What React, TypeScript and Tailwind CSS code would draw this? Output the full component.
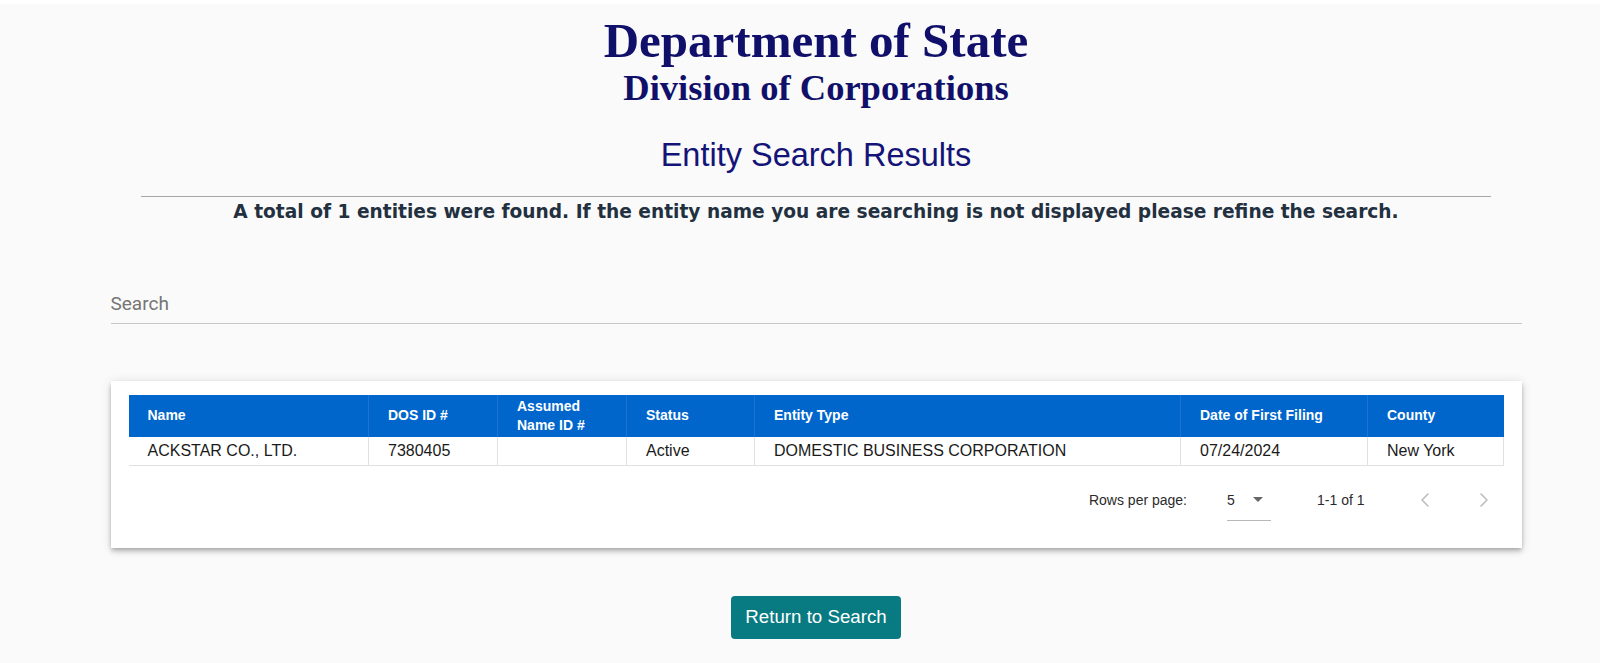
import { ChevronLeft, ChevronRight } from "lucide-react";

export default function App() {
  return (
    <div className="min-h-screen bg-[#fafafa] font-['Liberation_Sans',Arial,sans-serif]">
      <div className="h-[4px] bg-white" />
      <div className="pl-[32px] flex flex-col items-center">
        <h1 className="mt-[9px] text-[49px] leading-[55px] font-bold text-[#10106b] font-['Liberation_Serif',serif]">
          Department of State
        </h1>
        <h2 className="text-[36.5px] leading-[40px] font-bold text-[#10106b] font-['Liberation_Serif',serif]">
          Division of Corporations
        </h2>
        <h3 className="mt-[31px] text-[32.5px] leading-[32.5px] text-[#141478]">
          Entity Search Results
        </h3>
        <div className="mt-[24px] w-[1350px] border-t border-[#a6a6a6]" />
        <p className="mt-[6px] text-[18.6px] leading-[18px] font-bold text-[#22303f] font-['DejaVu_Sans',Verdana,sans-serif]">
          A total of 1 entities were found. If the entity name you are searching is not displayed please refine the search.
        </p>
        <input
          type="text"
          placeholder="Search"
          className="mt-[70px] w-[1411px] h-[33px] pb-[6px] border-b border-[#c8c8c8] bg-transparent outline-none text-[19px] font-['Roboto',sans-serif] text-[#333] placeholder:text-[#757575]"
        />
        <div className="mt-[57px] w-[1411px] bg-white px-[18px] pt-[14px] pb-[22px] shadow-[0_2px_4px_-1px_rgba(0,0,0,0.2),0_4px_5px_0_rgba(0,0,0,0.14),0_1px_10px_0_rgba(0,0,0,0.12)]">
          <table className="w-full table-fixed border-collapse">
            <colgroup>
              <col className="w-[240px]" />
              <col className="w-[129px]" />
              <col className="w-[129px]" />
              <col className="w-[128px]" />
              <col className="w-[426px]" />
              <col className="w-[187px]" />
              <col className="w-[136px]" />
            </colgroup>
            <thead>
              <tr className="h-[42px] bg-[#0066cc] text-white text-left text-[14px] leading-[19px] font-bold">
                <th className="pl-[19px] pr-[8px] border-r border-[#1c73d2]">Name</th>
                <th className="pl-[19px] pr-[8px] border-r border-[#1c73d2]">DOS ID #</th>
                <th className="pl-[19px] pr-[19px] border-r border-[#1c73d2]">Assumed Name ID #</th>
                <th className="pl-[19px] pr-[8px] border-r border-[#1c73d2]">Status</th>
                <th className="pl-[19px] pr-[8px] border-r border-[#1c73d2]">Entity Type</th>
                <th className="pl-[19px] pr-[8px] border-r border-[#1c73d2]">Date of First Filing</th>
                <th className="pl-[19px] pr-[8px]">County</th>
              </tr>
            </thead>
            <tbody>
              <tr className="text-[16px] text-[#1a1a1a]">
                <td className="h-[29px] pl-[19px] border-b border-r border-[#e0e0e0]">ACKSTAR CO., LTD.</td>
                <td className="h-[29px] pl-[19px] border-b border-r border-[#e0e0e0]">7380405</td>
                <td className="h-[29px] pl-[19px] border-b border-r border-[#e0e0e0]"></td>
                <td className="h-[29px] pl-[19px] border-b border-r border-[#e0e0e0]">Active</td>
                <td className="h-[29px] pl-[19px] border-b border-r border-[#e0e0e0]">DOMESTIC BUSINESS CORPORATION</td>
                <td className="h-[29px] pl-[19px] border-b border-r border-[#e0e0e0]">07/24/2024</td>
                <td className="h-[29px] pl-[19px] border-b border-r border-[#e0e0e0]">New York</td>
              </tr>
            </tbody>
          </table>
          <div className="mt-[8px] h-[52px] flex items-center justify-end pr-[8px] text-[14px] text-[#2b2b2b]">
            <span>Rows per page:</span>
            <div className="ml-[40px] w-[44px] py-[10px] leading-[20px] border-b border-[#b8b8b8] flex items-center">
              <span>5</span>
              <svg width="10" height="5" viewBox="0 0 10 5" className="ml-[18px]">
                <polygon points="0,0 10,0 5,5" fill="#666" />
              </svg>
            </div>
            <span className="ml-[46px]">1-1 of 1</span>
            <span className="ml-[48px] w-[24px] h-[24px] flex items-center justify-center text-[#bdbdbd]">
              <ChevronLeft size={24} strokeWidth={1.6} />
            </span>
            <span className="ml-[35px] w-[24px] h-[24px] flex items-center justify-center text-[#bdbdbd]">
              <ChevronRight size={24} strokeWidth={1.6} />
            </span>
          </div>
        </div>
        <button className="mt-[48px] h-[43px] px-[14px] rounded-[4px] bg-[#087b82] text-white text-[18.7px]">
          Return to Search
        </button>
      </div>
    </div>
  );
}
